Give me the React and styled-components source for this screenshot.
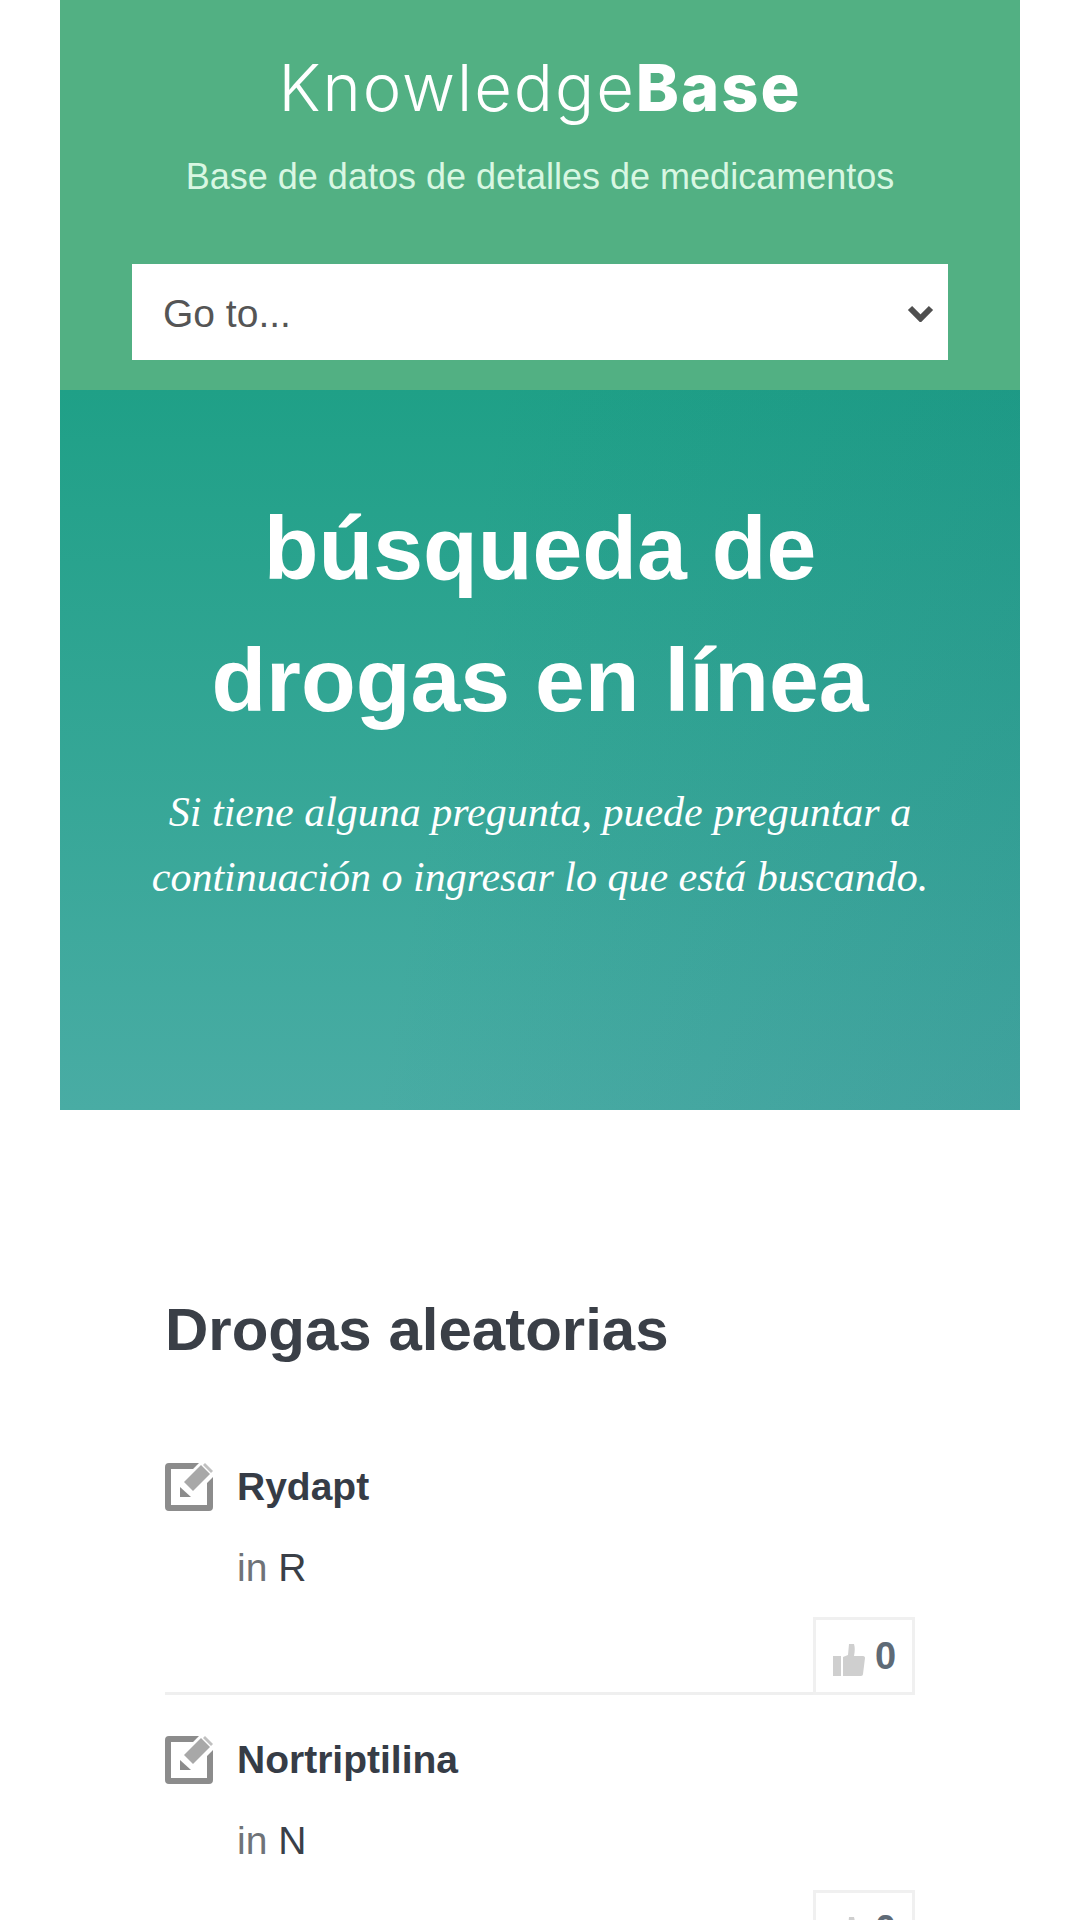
import React from "react";
import styled, { createGlobalStyle } from "styled-components";

const Global = createGlobalStyle`
  html, body { margin: 0; padding: 0; background: #fff; }
  #root { height: 1920px; overflow: hidden; }
`;
const Page = styled.div`
  width: 960px;
  margin: 0 auto;
  font-family: "Liberation Sans", Arial, sans-serif;
`;
const Header = styled.header`
  background: #52b083;
  padding: 48px 72px 30px;
  display: flex;
  flex-direction: column;
  align-items: stretch;
  text-align: center;
`;
const Logo = styled.div`
  font-family: Inter, sans-serif;
  font-size: 65px;
  line-height: 80px;
  font-weight: 300;
  letter-spacing: 2px;
  color: #fff;
  white-space: nowrap;
  strong { font-weight: 800; }
`;
const Tagline = styled.p`
  margin: 24px 0 0;
  font-size: 36px;
  line-height: 50px;
  color: #d8f7e2;
  white-space: nowrap;
`;
const SelectWrap = styled.div`
  position: relative;
  margin-top: 62px;
  height: 96px;
  background: #fff;
`;
const Select = styled.select`
  appearance: none;
  width: 100%;
  height: 100%;
  border: 0;
  background: transparent;
  padding: 2px 0 0 31px;
  font-family: inherit;
  font-size: 39px;
  color: #555;
`;
const Chevron = styled.svg`
  position: absolute;
  right: 14px;
  top: 41px;
  width: 27px;
  height: 17px;
  pointer-events: none;
`;
const Hero = styled.section`
  height: 720px;
  box-sizing: border-box;
  padding-top: 92px;
  text-align: center;
  color: #fff;
  background:
    linear-gradient(100deg, rgba(31, 160, 135, 0) 40%, rgba(20, 110, 125, 0.16) 100%),
    linear-gradient(180deg, #1fa087 0%, #49aca4 100%);
`;
const Title = styled.h1`
  margin: 0;
  font-size: 89.6px;
  line-height: 132px;
  font-weight: 700;
`;
const Lead = styled.p`
  margin: 34px 0 0;
  font-family: "Liberation Serif", "Times New Roman", serif;
  font-style: italic;
  font-size: 42px;
  line-height: 65px;
`;
const Content = styled.main`
  padding: 0 105px;
`;
const Heading = styled.h2`
  margin: 184px 0 0;
  font-size: 60px;
  line-height: 72px;
  font-weight: 700;
  color: #3a3f47;
`;
const List = styled.div`
  margin-top: 97px;
  display: flex;
  flex-direction: column;
`;
const Item = styled.article`
  position: relative;
  height: 273px;
  box-sizing: border-box;
  display: flex;
  gap: 24px;
`;
const Divider = styled.div`
  position: absolute;
  left: 0;
  right: 0;
  top: 229px;
  height: 3px;
  background: #efefef;
`;
const EditIcon = styled.svg`
  width: 48px;
  height: 48px;
  flex: none;
  filter: blur(0.5px);
`;
const Body = styled.div`
  display: flex;
  flex-direction: column;
`;
const ItemTitle = styled.h3`
  margin: 0;
  font-size: 39px;
  line-height: 48px;
  font-weight: 700;
  color: #363c46;
`;
const Meta = styled.p`
  margin: 33px 0 0;
  font-size: 39px;
  line-height: 48px;
  color: #6f7378;
  a { color: #3a3f47; text-decoration: none; }
`;
const Vote = styled.div`
  position: absolute;
  right: 0;
  top: 154px;
  width: 102px;
  height: 78px;
  box-sizing: border-box;
  border: 3px solid #f0f0f0;
  display: flex;
  align-items: center;
  gap: 10px;
  background: #fff;
  padding-left: 17px;
  font-size: 38px;
  font-weight: 700;
  color: #5e6a76;
`;
const ThumbIcon = styled.svg`
  width: 32px;
  height: 32px;
  flex: none;
  margin-top: 7px;
  filter: blur(0.4px);
`;

const Edit = () => (
  <EditIcon viewBox="0 0 48 48" aria-hidden="true">
    <path
      d="M4 0h30l-6 6H6v36h36V20l6-6v30a4 4 0 0 1-4 4H4a4 4 0 0 1-4-4V4a4 4 0 0 1 4-4z"
      fill="#8c8c8c"
    />
    <path d="M36 2l9 9-17 17-9-9z" fill="#a8a8a8" />
    <path d="M40 0l8 8-2 2-8-8z" fill="#c0c0c0" />
    <path d="M15 24v10h11z" fill="#8c8c8c" />
  </EditIcon>
);

const Thumb = () => (
  <ThumbIcon viewBox="0 0 32 32" aria-hidden="true">
    <rect x="0" y="12" width="8" height="20" fill="#cfcfcf" />
    <path
      d="M10 13l5-2 1-11h5c1 3 1 7 0 12h9c1.500 0 2 1 2 2l-2 16c0 1-1 2-2 2H10z"
      fill="#cfcfcf"
    />
  </ThumbIcon>
);

const drugs = [
  { name: "Rydapt", letter: "R" },
  { name: "Nortriptilina", letter: "N" },
];

export default function App() {
  return (
    <>
      <Global />
      <Page>
        <Header>
          <Logo>
            Knowledge<strong>Base</strong>
          </Logo>
          <Tagline>Base de datos de detalles de medicamentos</Tagline>
          <SelectWrap>
            <Select defaultValue="go">
              <option value="go">Go to...</option>
            </Select>
            <Chevron viewBox="0 0 27 17" aria-hidden="true">
              <path d="M3 3l10.500 10.500L24 3" fill="none" stroke="#4f4f4f" strokeWidth="6" />
            </Chevron>
          </SelectWrap>
        </Header>
        <Hero>
          <Title>
            búsqueda de
            <br />
            drogas en línea
          </Title>
          <Lead>
            Si tiene alguna pregunta, puede preguntar a
            <br />
            continuación o ingresar lo que está buscando.
          </Lead>
        </Hero>
        <Content>
          <Heading>Drogas aleatorias</Heading>
          <List>
            {drugs.map((d) => (
              <Item key={d.name}>
                <Edit />
                <Body>
                  <ItemTitle>{d.name}</ItemTitle>
                  <Meta>
                    in <a href="#">{d.letter}</a>
                  </Meta>
                </Body>
                <Divider />
                <Vote>
                  <Thumb />0
                </Vote>
              </Item>
            ))}
          </List>
        </Content>
      </Page>
    </>
  );
}
